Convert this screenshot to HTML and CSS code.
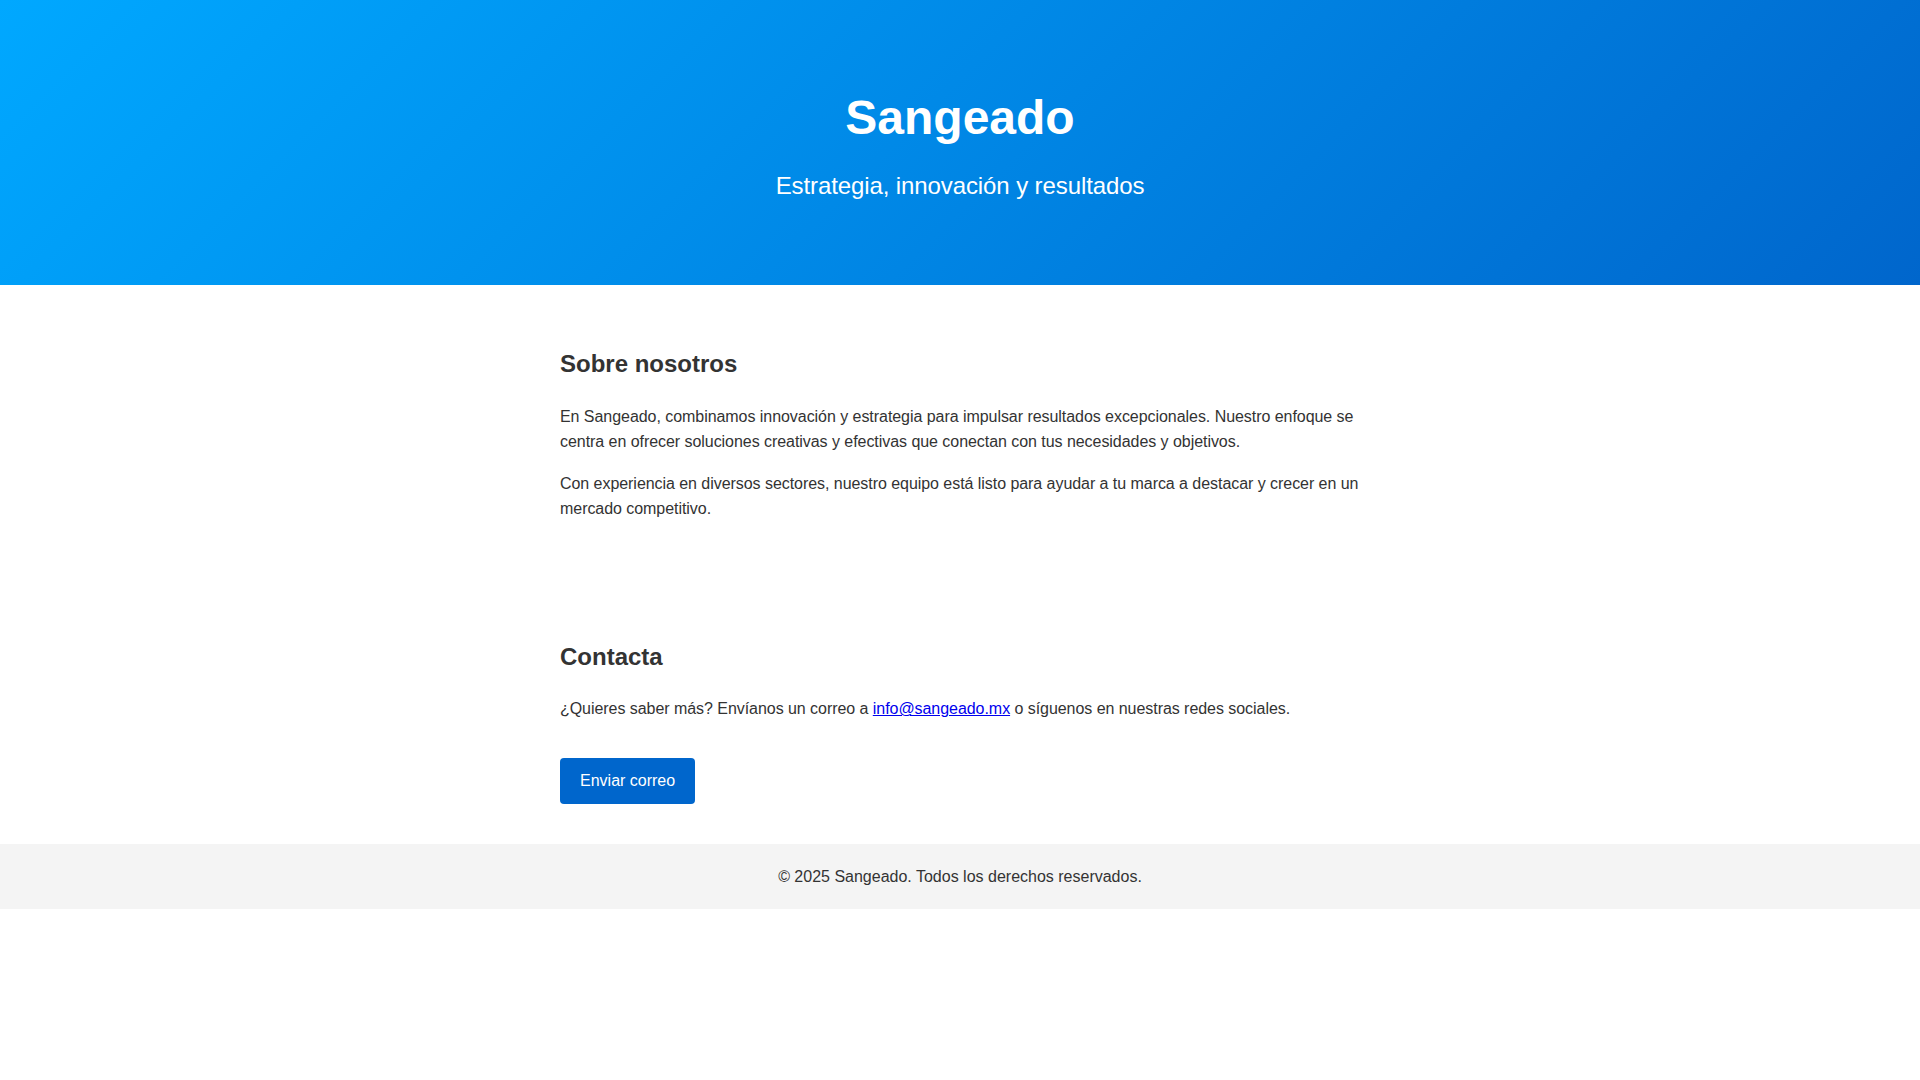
FILE: index.html
```html
<!DOCTYPE html>
<html lang="es">
<head>
<meta charset="utf-8">
<title>Sangeado</title>
<link rel="stylesheet" href="styles.css">
</head>
<body>
<header class="hero">
  <h1 class="hero-title">Sangeado</h1>
  <p class="hero-sub">Estrategia, innovación y resultados</p>
</header>
<main class="container">
  <section class="section">
    <h2 class="section-title">Sobre nosotros</h2>
    <p class="text">En Sangeado, combinamos innovación y estrategia para impulsar resultados excepcionales. Nuestro enfoque se centra en ofrecer soluciones creativas y efectivas que conectan con tus necesidades y objetivos.</p>
    <p class="text">Con experiencia en diversos sectores, nuestro equipo está listo para ayudar a tu marca a destacar y crecer en un mercado competitivo.</p>
  </section>
  <section class="section">
    <h2 class="section-title">Contacta</h2>
    <p class="text">¿Quieres saber más? Envíanos un correo a <a href="mailto:info@sangeado.mx">info@sangeado.mx</a> o síguenos en nuestras redes sociales.</p>
    <a class="btn" href="mailto:info@sangeado.mx">Enviar correo</a>
  </section>
</main>
<footer class="footer">
  <p class="footer-text">© 2025 Sangeado. Todos los derechos reservados.</p>
</footer>
</body>
</html>
```
FILE: styles.css
```css
html, body {
  margin: 0;
  padding: 0;
}
body {
  font-family: "Liberation Sans", Arial, sans-serif;
  font-size: 16px;
  line-height: 1.6;
  color: #333;
  background: #fff;
}
.hero {
  background: linear-gradient(135deg, #00a8ff, #0066cc);
  color: #fff;
  text-align: center;
  padding: 80px 20px;
}
.hero-title {
  margin: 0 0 10px;
  font-size: 48px;
  font-weight: bold;
}
.hero-sub {
  margin: 0;
  font-size: 24px;
  letter-spacing: -0.1px;
}
.container {
  max-width: 800px;
  margin: 0 auto;
}
.section {
  padding: 40px 0;
}
.section-title {
  font-size: 24px;
  font-weight: bold;
  margin: 20px 0;
}
.text {
  margin: 16px 0;
  letter-spacing: -0.05px;
}
.btn {
  display: inline-block;
  margin-top: 20px;
  padding: 10px 20px;
  background: #0066cc;
  color: #fff;
  text-decoration: none;
  border-radius: 4px;
  vertical-align: top;
}
.footer {
  background: #f4f4f4;
  text-align: center;
  padding: 20px;
}
.footer-text {
  margin: 0;
}
```
